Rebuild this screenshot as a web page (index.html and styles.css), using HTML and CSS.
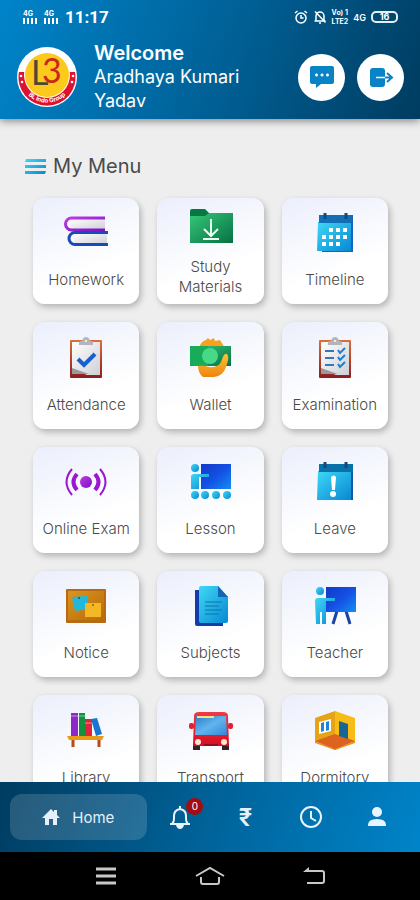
FILE: index.html
```html
<!DOCTYPE html>
<html lang="en">
<head>
  <meta charset="UTF-8">
  <meta name="viewport" content="width=device-width, initial-scale=1">
  <title>My Menu</title>
  <link rel="stylesheet" href="styles.css">
</head>
<body>

  <!-- Shared gradients -->
  <svg class="defs" width="0" height="0" aria-hidden="true">
    <defs>
      <linearGradient id="cyan" x1="0" y1="0" x2="1" y2="1"><stop offset="0" stop-color="#3fd8f5"/><stop offset="1" stop-color="#0788d4"/></linearGradient>
      <linearGradient id="blue" x1="0" y1="0" x2="1" y2="1"><stop offset="0" stop-color="#1238c8"/><stop offset=".5" stop-color="#1450e4"/><stop offset="1" stop-color="#128ef2"/></linearGradient>
      <linearGradient id="green" x1="0" y1="0" x2="1" y2="1"><stop offset="0" stop-color="#35c878"/><stop offset="1" stop-color="#087044"/></linearGradient>
      <linearGradient id="purple" x1="0" y1="0" x2="1" y2="1"><stop offset="0" stop-color="#c03be0"/><stop offset="1" stop-color="#7a10c8"/></linearGradient>
      <linearGradient id="paper" x1="0" y1="0" x2="1" y2="1"><stop offset="0" stop-color="#fff"/><stop offset="1" stop-color="#cfd0d6"/></linearGradient>
      <linearGradient id="orange" x1="0" y1="0" x2="0" y2="1"><stop offset="0" stop-color="#ffc233"/><stop offset="1" stop-color="#ee8410"/></linearGradient>
      <linearGradient id="clip" x1="0" y1="0" x2="0" y2="1"><stop offset="0" stop-color="#d8703c"/><stop offset="1" stop-color="#8c1c20"/></linearGradient>
      <linearGradient id="board" x1="0" y1="0" x2="1" y2="1"><stop offset="0" stop-color="#d99520"/><stop offset="1" stop-color="#b96a0a"/></linearGradient>
      <linearGradient id="red" x1="0" y1="0" x2="0" y2="1"><stop offset="0" stop-color="#f03a44"/><stop offset="1" stop-color="#d40e20"/></linearGradient>
      <linearGradient id="glass" x1="0" y1="0" x2="1" y2="1"><stop offset="0" stop-color="#2a7cc8"/><stop offset=".5" stop-color="#62b4ee"/><stop offset="1" stop-color="#2f86d6"/></linearGradient>
    </defs>
  </svg>

  <header class="header">
    <div class="status">
      <div class="status-left">
        <span class="signal"><small>4G</small><i></i></span>
        <span class="signal"><small>4G</small><i></i></span>
        <span class="clock">11:17</span>
      </div>
      <div class="status-right">
        <svg width="14" height="14" viewBox="0 0 14 14" fill="none" stroke="#fff" stroke-width="1.5"><circle cx="7" cy="8" r="5"/><path d="M7 5v3h2.5M1 3l2.5-2M13 3l-2.500-2"/></svg>
        <svg width="14" height="14" viewBox="0 0 14 14" fill="none" stroke="#fff" stroke-width="1.5"><path d="M3 11V6a4 4 0 0 1 8 0v5zM1.5 11h11M2 1.5l10.500 11"/><path d="M6 13h2"/></svg>
        <span class="volte"><span>Vo) 1</span><span>LTE2</span></span>
        <small class="net">4G</small>
        <span class="battery">16</span>
      </div>
    </div>

    <div class="profile">
      <svg class="logo" viewBox="0 0 60 60" role="img" aria-label="BL Indo Group">
        <circle cx="30" cy="30" r="30" fill="#fff"/>
        <path d="M2 25A28.500 28.500 0 1 0 58 25z" fill="#dc1230"/>
        <circle cx="30" cy="28" r="23" fill="#fff"/>
        <circle cx="30" cy="28" r="22" fill="#fcc91c"/>
        <text class="logo-l" x="14" y="38">L</text>
        <text class="logo-b" x="25" y="36">3</text>
        <path id="arc" d="M6 41A27 27 0 0 0 54 41" fill="none"/>
        <text class="logo-name"><textPath href="#arc" startOffset="50%" text-anchor="middle">BL Indo Group</textPath></text>
        <g fill="#fff"><circle cx="4" cy="29" r="1.300"/><circle cx="5" cy="35" r="1.300"/><circle cx="56" cy="29" r="1.300"/><circle cx="55" cy="35" r="1.300"/></g>
      </svg>
      <div class="greeting">
        <strong>Welcome</strong>
        <p>Aradhaya Kumari Yadav</p>
      </div>
      <button class="round" aria-label="Messages">
        <svg width="26" height="26" viewBox="0 0 26 26"><path d="M3 2h20a2 2 0 0 1 2 2v14a2 2 0 0 1-2 2H12l-5 4v-4H3a2 2 0 0 1-2-2V4a2 2 0 0 1 2-2z" fill="#0883c6"/><path d="M6 11h3M11.500 11h3M17 11h3M7.500 9.500v3M13 9.500v3M18.500 9.500v3" stroke="#fff" stroke-width="1.500"/></svg>
      </button>
      <button class="round" aria-label="Log out">
        <svg width="26" height="26" viewBox="0 0 26 26" fill="none"><rect x="2" y="4" width="15" height="19" rx="3" fill="#0883c6"/><path d="M8 13.500h9" stroke="#fff" stroke-width="1.500"/><path d="M17 13.500h7M19 9l5 4.500-5 4.500" stroke="#0883c6" stroke-width="2"/></svg>
      </button>
    </div>
  </header>

  <main class="content">
    <h1 class="title">
      <svg width="21" height="17" viewBox="0 0 21 17"><path d="M1 1h20v3H0zM0 7h21v3H0zM0 13h21l-1 3H0z" fill="url(#cyan)"/></svg>
      My Menu
    </h1>

    <div class="grid">
      <a class="card" href="#">
        <svg viewBox="0 0 42 42"><path d="M5 7h35v10H6z" fill="url(#paper)"/><path d="M40 6H6.500a5.500 5.500 0 0 0 0 12H40" fill="none" stroke="url(#purple)" stroke-width="3"/><path d="M9 21h33v11H9z" fill="url(#paper)"/><path d="M43 20.500H10a6 6 0 0 0 0 12h33" fill="none" stroke="#194bb8" stroke-width="3"/></svg>
        <span>Homework</span>
      </a>
      <a class="card card-long" href="#">
        <svg viewBox="0 0 42 42"><path d="M0 5q0-2 2-2h13l4 4h22v30H0z" fill="#087843"/><path d="M0 10h15l4-3h24v30H0z" fill="url(#green)"/><path d="M21 13v16M14 23l7 7 7-7M13 33h16" fill="none" stroke="#e8fff0" stroke-width="2"/></svg>
        <span>Study Materials</span>
      </a>
      <a class="card" href="#">
        <svg viewBox="0 0 42 42"><path d="M5 3h34v37H8z" fill="#1565c0"/><path d="M4 10h33v29H3z" fill="url(#cyan)"/><path d="M5 3h33v8H5z" fill="#1170b4"/><path d="M11 1v6M32 1v6" stroke="#164880" stroke-width="3"/><g fill="#fff"><path d="M15 16h4v4h-4zM22 16h4v4h-4zM29 16h4v4h-4zM8 23h4v4H8zM15 23h4v4h-4zM22 23h4v4h-4zM29 23h4v4h-4zM8 30h4v4H8zM15 30h4v4h-4zM22 30h4v4h-4z"/></g></svg>
        <span>Timeline</span>
      </a>

      <a class="card" href="#">
        <svg viewBox="0 0 42 42"><rect x="5" y="3" width="32" height="38" rx="1" fill="url(#clip)"/><path d="M7 5h28v33H22L7 32z" fill="url(#paper)"/><path d="M7 31l17 6H7z" fill="#999"/><path d="M14 8V5q0-1 3-1 1-4 4-4t4 4q3 0 3 1v3z" fill="#b4b5bb"/><circle cx="21" cy="4" r="1" fill="#fff"/><path d="M13 22l6 6 11-11" fill="none" stroke="#1760d0" stroke-width="4"/></svg>
        <span>Attendance</span>
      </a>
      <a class="card" href="#">
        <svg viewBox="0 0 42 42"><path d="M9 11q2-7 7-8l2-2 2 2 4-2 1 3 5-1 5 8z" fill="#f6a21f"/><path d="M0 9h41v20H0z" fill="url(#green)"/><path d="M0 9h18v20H0z" fill="#18ac58"/><circle cx="20" cy="19" r="8" fill="#47d888"/><path d="M8 29q6-1 11 1 9 1 12-5 3-10 6-8 3 3-1 13-3 9-12 10H13q-5-4-5-11z" fill="url(#orange)"/></svg>
        <span>Wallet</span>
      </a>
      <a class="card" href="#">
        <svg viewBox="0 0 42 42"><rect x="5" y="3" width="32" height="38" rx="1" fill="url(#clip)"/><path d="M7 5h28v33H22L7 32z" fill="url(#paper)"/><path d="M7 31l17 6H7z" fill="#999"/><path d="M14 8V5q0-1 3-1 1-4 4-4t4 4q3 0 3 1v3z" fill="#b4b5bb"/><circle cx="21" cy="4" r="1" fill="#fff"/><path d="M11 14h9M11 21h9M11 28h9" stroke="#3378b8" stroke-width="2"/><path d="M24 13l2 3 5-5M24 20l2 3 5-5M24 27l2 3 5-5" fill="none" stroke="#1680d4" stroke-width="2"/></svg>
        <span>Examination</span>
      </a>

      <a class="card" href="#">
        <svg viewBox="0 0 42 42"><circle cx="21" cy="21" r="6" fill="url(#purple)"/><g fill="none" stroke="#9a18d0"><path d="M12 13q-7 8 0 16M30 13q7 8 0 16" stroke-width="4"/><path d="M7 8q-11 13 0 26M35 8q11 13 0 26" stroke-width="2"/></g></svg>
        <span>Online Exam</span>
      </a>
      <a class="card" href="#">
        <svg viewBox="0 0 42 42"><rect x="11" y="3" width="30" height="25" fill="url(#blue)"/><g fill="url(#cyan)"><circle cx="5" cy="7" r="4"/><path d="M1 16q0-3 3-3h15v3H9v12H1z"/><circle cx="5" cy="34" r="4"/><circle cx="15" cy="34" r="4"/><circle cx="26" cy="34" r="4"/><circle cx="37" cy="34" r="4"/></g></svg>
        <span>Lesson</span>
      </a>
      <a class="card" href="#">
        <svg viewBox="0 0 42 42"><path d="M5 3h34v36H8z" fill="#1257a4"/><path d="M4 10h33v29H3z" fill="url(#cyan)"/><path d="M5 3h34v8H5z" fill="#0872a8"/><path d="M11 1v6M32 1v6" stroke="#164880" stroke-width="3"/><path d="M17 16q3-3 5 0l-1 13h-3z" fill="#fff"/><circle cx="19" cy="33" r="3" fill="#fff"/></svg>
        <span>Leave</span>
      </a>

      <a class="card" href="#">
        <svg viewBox="0 0 42 42"><rect x="1" y="4" width="40" height="34" rx="1" fill="#b66b10"/><rect x="3" y="6" width="36" height="29" fill="url(#board)"/><path d="M7 12l15-1 2 13-14 2z" fill="#20b8dc"/><path d="M20 18h16v14H20z" fill="#f4b824"/><circle cx="14" cy="13" r="1" fill="#174f70"/><circle cx="28" cy="20" r="1" fill="#a35b00"/></svg>
        <span>Notice</span>
      </a>
      <a class="card" href="#">
        <svg viewBox="0 0 42 42"><path d="M5 5h8v32h20v4H7q-2 0-2-2z" fill="#123cac"/><path d="M11 1h17l10 11v24q0 2-2 2H11q-2 0-2-2V3q0-2 2-2z" fill="url(#cyan)"/><path d="M28 1v11h10z" fill="#1465b4"/><path d="M15 17h17M15 21h14M15 25h17M15 29h14" stroke="#0874ac" stroke-width="1"/></svg>
        <span>Subjects</span>
      </a>
      <a class="card" href="#">
        <svg viewBox="0 0 42 42"><path d="M23 26l-4 13M32 26l4 13" stroke="#1843a4" stroke-width="3"/><rect x="12" y="2" width="30" height="25" fill="url(#blue)"/><g fill="url(#cyan)"><circle cx="6" cy="6" r="4"/><path d="M1 16q0-3 3-3h17v3h-9v23H8V27H6v12H2z"/></g></svg>
        <span>Teacher</span>
      </a>

      <a class="card" href="#">
        <svg viewBox="0 0 42 42"><rect x="6" y="3" width="7" height="23" fill="#8f28c8"/><rect x="14" y="3" width="6" height="23" fill="#13913f"/><rect x="20" y="9" width="7" height="17" fill="#dd2638"/><path d="M26 9l6-1 5 16-6 2z" fill="#1875d2"/><path d="M6 6h7M14 6h6M20 13h7" stroke="#fff" opacity=".5"/><path d="M8 29v8M34 29v8" stroke="#b44b18" stroke-width="3"/><path d="M2 26h37l-2 4H4z" fill="#e89b18"/></svg>
        <span>Library</span>
      </a>
      <a class="card" href="#">
        <svg viewBox="0 0 42 42"><path d="M3 34h7v6H3zM32 34h7v6h-7z" fill="#352025"/><rect x="-1" y="13" width="5" height="6" rx="2" fill="#df2031"/><rect x="38" y="13" width="5" height="6" rx="2" fill="#df2031"/><path d="M4 6q0-4 5-4h24q5 0 5 4l1 30H3z" fill="url(#red)"/><path d="M6 6h30l1 19H5z" fill="url(#glass)"/><path d="M7 7h17" stroke="#f8df86" stroke-width="2"/><path d="M14 35h14" stroke="#8b1020" stroke-width="2"/><circle cx="8" cy="32" r="3" fill="#ffe5d3"/><circle cx="34" cy="32" r="3" fill="#ffe5d3"/></svg>
        <span>Transport</span>
      </a>
      <a class="card" href="#">
        <svg viewBox="0 0 42 42"><path d="M1 8l20-7v25L1 33z" fill="#e5a316"/><path d="M21 1l20 7v25l-20-7z" fill="#f7bc16"/><path d="M1 31l20-7 20 7-20 9z" fill="#dc6320"/><path d="M1 31l20 8 20-8v2l-20 7-20-7z" fill="#e99422"/><path d="M5 12l12-3v12L5 24z" fill="#fff"/><path d="M7 13l3-1v9l-3 1zM12 12l3-1v9l-3 1z" fill="#2484d4"/><path d="M25 11l9 3v15l-9-3z" fill="#176594"/></svg>
        <span>Dormitory</span>
      </a>
    </div>
  </main>

  <nav class="tabs">
    <a class="tab tab-home" href="#">
      <svg width="18" height="18" viewBox="0 0 18 18" fill="#e4f1fa"><path d="M9 1l3 3V2h3v5l3 3h-3v7h-4v-6H7v6H3v-7H0z"/></svg>
      Home
    </a>
    <a class="tab" href="#" aria-label="Notifications">
      <svg class="bell" width="22" height="24" viewBox="0 0 22 24"><path d="M1 19h20M3 19q2-2 2-5v-3q0-6 6-7 6 1 6 7v3q0 3 2 5M11 4V1" fill="none" stroke="#e8f5ff" stroke-width="2"/><path d="M7 20h8q-1 4-4 4t-4-4z" fill="#e8f5ff"/></svg>
      <span class="badge">0</span>
    </a>
    <a class="tab rupee" href="#" aria-label="Fees">₹</a>
    <a class="tab" href="#" aria-label="History">
      <svg width="24" height="24" viewBox="0 0 24 24" fill="none" stroke="#e8f5ff" stroke-width="2"><circle cx="12" cy="12" r="10"/><path d="M12 6v7l5 3"/></svg>
    </a>
    <a class="tab" href="#" aria-label="Profile">
      <svg width="20" height="20" viewBox="0 0 20 20" fill="#e8f5ff"><circle cx="10" cy="5" r="5"/><path d="M1 18q0-6 9-6t9 6v1H1z"/></svg>
    </a>
  </nav>

  <footer class="system">
    <button aria-label="Recent apps"><svg width="22" height="18" viewBox="0 0 22 18"><path d="M1 2h20M1 9h20M1 16h20" stroke="#c8c8c8" stroke-width="3"/></svg></button>
    <button aria-label="Home screen"><svg width="30" height="20" viewBox="0 0 30 20" fill="none" stroke="#c8c8c8" stroke-width="2"><path d="M1 10L15 2l14 8M6 11v5q0 2 2 2h14q2 0 2-2v-5"/></svg></button>
    <button aria-label="Back"><svg width="22" height="18" viewBox="0 0 22 18"><path d="M3 4h16q2 0 2 2v8q0 2-2 2H4" fill="none" stroke="#c8c8c8" stroke-width="2"/><path d="M0 5l6-5v5z" fill="#c8c8c8"/></svg></button>
  </footer>

</body>
</html>
```
FILE: styles.css
```css
:root {
  --light: #0084ca;
  --dark: #003c60;
  --page: #eeeeee;
  --text: #4a4a4a;
}

* {
  box-sizing: border-box;
}

body {
  margin: 0;
  height: 100vh;
  display: flex;
  flex-direction: column;
  background: var(--page);
  color: var(--text);
  font-family: Inter, "Open Sans", sans-serif;
}

a {
  color: inherit;
  text-decoration: none;
}

button {
  padding: 0;
  border: none;
  background: none;
  display: flex;
  align-items: center;
  justify-content: center;
}

.defs {
  position: absolute;
}

/* Header */
.header {
  position: relative;
  flex: none;
  padding: 8px 16px 6px 17px;
  background: linear-gradient(110deg, var(--light), #005f94 55%, var(--dark));
  box-shadow: 0 2px 8px rgba(0, 0, 0, 0.45);
  color: #fff;
}

.status,
.status-left,
.status-right {
  display: flex;
  align-items: center;
}

.status {
  justify-content: space-between;
  height: 18px;
  padding: 0 6px;
}

.status-left {
  gap: 7px;
}

.status-right {
  gap: 5px;
}

.signal small {
  display: block;
  font-size: 7px;
  font-weight: 700;
  line-height: 8px;
}

.signal i {
  display: block;
  width: 14px;
  height: 6px;
  background: repeating-linear-gradient(90deg, #fff 0 2px, transparent 2px 4px);
}

.clock {
  font-family: Roboto, sans-serif;
  font-size: 17px;
  font-weight: 700;
  line-height: 18px;
}

.volte {
  display: flex;
  flex-direction: column;
  font-size: 7px;
  font-weight: 700;
  line-height: 9px;
}

.net {
  font-size: 9px;
  font-weight: 600;
}

.battery {
  width: 27px;
  height: 12px;
  border: 2px solid #e3eef5;
  border-radius: 5px;
  font-size: 9px;
  font-weight: 700;
  line-height: 8px;
  text-align: center;
}

.profile {
  display: flex;
  align-items: center;
  gap: 12px;
  margin-top: 15px;
}

.logo {
  flex: none;
  width: 60px;
  height: 60px;
}

.logo-l,
.logo-b {
  font-family: Lato, sans-serif;
  font-size: 34px;
  fill: #4d4933;
}

.logo-b {
  fill: #c8281c;
}

.logo-name {
  font-size: 6px;
  font-weight: 700;
  fill: #fff;
}

.greeting {
  flex: 1;
  padding-left: 5px;
  font-size: 18px;
  line-height: 24px;
}

.greeting strong {
  display: block;
  font-size: 20px;
  font-weight: 600;
}

.greeting p {
  margin: 0;
}

.round {
  flex: none;
  width: 47px;
  height: 47px;
  border-radius: 50%;
  background: #fff;
}

/* Menu */
.content {
  flex: 1;
  min-height: 0;
  overflow-y: auto;
  scrollbar-width: none;
}

.title {
  display: flex;
  align-items: center;
  gap: 7px;
  margin: 0;
  padding: 34px 25px 19px;
  font-size: 20px;
  font-weight: 400;
  line-height: 26px;
}

.grid {
  display: grid;
  grid-template-columns: repeat(3, 1fr);
  gap: 18px;
  padding: 0 32px 18px 33px;
}

.card {
  display: flex;
  flex-direction: column;
  align-items: center;
  justify-content: center;
  gap: 9px;
  aspect-ratio: 1;
  padding-top: 7px;
  border-radius: 12px;
  background: linear-gradient(160deg, #ebeffc, #fff 65%);
  box-shadow: 2px 3px 6px rgba(0, 0, 0, 0.25);
}

.card svg {
  flex: none;
  width: 42px;
  height: 42px;
  overflow: visible;
}

.card span {
  display: flex;
  align-items: center;
  min-height: 34px;
  font-size: 15px;
  font-weight: 300;
  line-height: 20px;
  text-align: center;
}

.card-long {
  padding: 0 16px;
}

/* Bottom tabs */
.tabs {
  flex: none;
  display: grid;
  grid-template-columns: 137fr 66fr 66fr 66fr 66fr;
  height: 70px;
  padding: 12px 10px;
  background: linear-gradient(110deg, var(--dark), #005f94 45%, var(--light));
  color: #e4f1fa;
}

.tab {
  position: relative;
  display: flex;
  align-items: center;
  justify-content: center;
}

.tab-home {
  gap: 12px;
  border-radius: 12px;
  background: rgba(255, 255, 255, 0.15);
  font-size: 15px;
}

.rupee {
  font-size: 24px;
  font-weight: 600;
}

.badge {
  position: absolute;
  top: 4px;
  right: 9px;
  width: 17px;
  height: 17px;
  border-radius: 50%;
  background: #a40c10;
  color: #fff;
  font-size: 10px;
  line-height: 17px;
  text-align: center;
}

.system {
  flex: none;
  display: flex;
  align-items: center;
  justify-content: space-between;
  height: 48px;
  padding: 0 21%;
  background: #000;
}

.system button {
  width: 36px;
  height: 36px;
}
```
